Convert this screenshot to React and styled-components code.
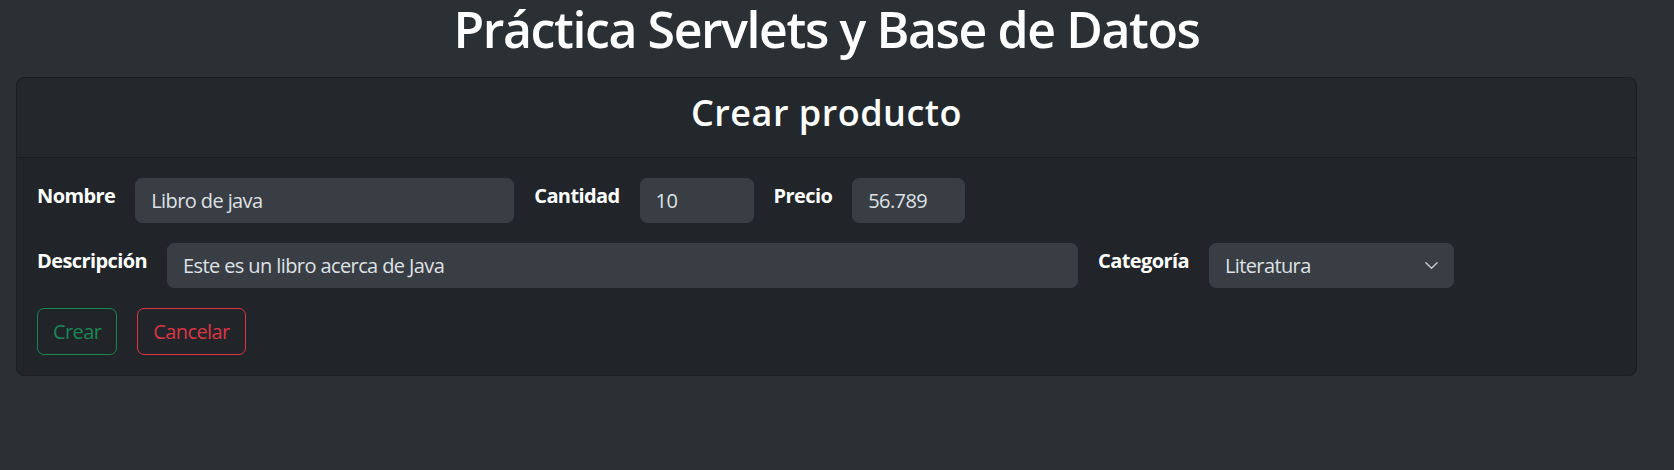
import styled, { createGlobalStyle } from "styled-components";

const GlobalStyle = createGlobalStyle`
	html, body {
		margin: 0;
		background: #2b3035;
	}
	body {
		font-family: "Open Sans", "Noto Sans", sans-serif;
		color: #dee2e6;
	}
`;

export default function App() {
	return (
		<>
			<GlobalStyle />
			<Page>
				<Heading>Práctica Servlets y Base de Datos</Heading>
				<Card>
					<CardHeader>
						<CardTitle>Crear producto</CardTitle>
					</CardHeader>
					<CardBody>
						<Row>
							<Label>Nombre</Label>
							<Input width={379} defaultValue="Libro de java" />
							<Label>Cantidad</Label>
							<Input width={114} defaultValue="10" />
							<Label>Precio</Label>
							<Input width={113} defaultValue="56.789" />
						</Row>
						<Row>
							<Label>Descripción</Label>
							<Input width={911} defaultValue="Este es un libro acerca de Java" />
							<Label>Categoría</Label>
							<SelectWrap>
								<Select defaultValue="lit">
									<option value="lit">Literatura</option>
								</Select>
								<Chevron viewBox="0 0 16 16">
									<path d="m2 5 6 6 6-6" />
								</Chevron>
							</SelectWrap>
						</Row>
						<Row>
							<Button color="#198754">Crear</Button>
							<Button color="#dc3545">Cancelar</Button>
						</Row>
					</CardBody>
				</Card>
			</Page>
		</>
	);
}

const Page = styled.div`
	padding: 0 37px 0 16px;
`;

const Heading = styled.h1`
	margin: 0 0 19px;
	font-size: 50px;
	font-weight: 600;
	line-height: 58px;
	letter-spacing: -1.4px;
	text-align: center;
	color: #fff;
`;

const Card = styled.div`
	background: #212529;
	border: 1px solid #1b1e22;
	border-radius: 8px;
	overflow: hidden;
`;

const CardHeader = styled.div`
	padding: 13px 20px;
	background: rgba(222, 226, 230, 0.015);
	border-bottom: 1px solid #1a1d20;
`;

const CardTitle = styled.h2`
	margin: 0 0 10px;
	font-size: 36px;
	font-weight: 600;
	line-height: 43px;
	letter-spacing: 0.5px;
	text-align: center;
	color: #fff;
`;

const CardBody = styled.div`
	padding: 20px;
	display: flex;
	flex-direction: column;
	gap: 20px;
`;

const Row = styled.div`
	display: flex;
	align-items: flex-start;
	gap: 20px;
`;

const Label = styled.label`
	padding-top: 3px;
	font-size: 20px;
	font-weight: 700;
	line-height: 30px;
	letter-spacing: -0.6px;
	color: #fff;
	white-space: nowrap;
`;

const Input = styled.input`
	box-sizing: border-box;
	width: ${(p) => p.width}px;
	height: 45px;
	padding: 0 15px;
	background: #393d44;
	border: 1px solid #393d44;
	border-radius: 7px;
	font-family: inherit;
	font-size: 20px;
	letter-spacing: -0.6px;
	color: #dee2e6;
	outline: none;
`;

const SelectWrap = styled.div`
	position: relative;
	width: 245px;
`;

const Select = styled.select`
	box-sizing: border-box;
	width: 100%;
	height: 45px;
	padding: 0 40px 0 15px;
	appearance: none;
	background: #393d44;
	border: 1px solid #393d44;
	border-radius: 7px;
	font-family: inherit;
	font-size: 20px;
	letter-spacing: -0.6px;
	color: #dee2e6;
	outline: none;
`;

const Chevron = styled.svg`
	position: absolute;
	right: 15px;
	top: 15px;
	width: 15px;
	height: 15px;
	fill: none;
	stroke: #c8ccd0;
	stroke-width: 1.5;
	stroke-linecap: round;
	stroke-linejoin: round;
	pointer-events: none;
`;

const Button = styled.button`
	box-sizing: border-box;
	height: 47px;
	padding: 0 15px;
	background: transparent;
	border: 1px solid ${(p) => p.color};
	border-radius: 7px;
	font-family: inherit;
	font-size: 20px;
	letter-spacing: -0.6px;
	color: ${(p) => p.color};
	cursor: pointer;
`;
